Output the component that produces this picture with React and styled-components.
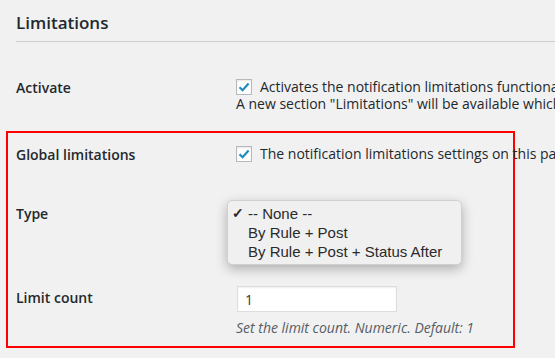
import React from "react";
import styled, { createGlobalStyle } from "styled-components";

const Global = createGlobalStyle`
  html, body {
    margin: 0;
    background: #f1f1f1;
    overflow: hidden;
  }
  body {
    font-family: "Open Sans", "Liberation Sans", sans-serif;
    color: #23282d;
    font-size: 14px;
  }
`;

function Check() {
  return (
    <Box>
      <svg width="12" height="12" viewBox="0 0 12 12">
        <path d="M1.5 6.2 L4.6 9.2 L10.6 2.4" fill="none" stroke="#1e8cbe" strokeWidth="2.2" />
      </svg>
    </Box>
  );
}

export default function App() {
  return (
    <>
      <Global />
      <Page>
        <Title>Limitations</Title>
        <Divider />

        <Row top={36}>
          <Label>Activate</Label>
          <Field>
            <CheckLine>
              <Check />
              Activates the notification limitations functionality for this post type.
            </CheckLine>
            <Line>
              A new section "Limitations" will be available which allows to set limitations.
            </Line>
          </Field>
        </Row>

        <Marked>
          <Row top={12}>
            <Label>Global limitations</Label>
            <Field>
              <CheckLine>
                <Check />
                The notification limitations settings on this page apply to all posts.
              </CheckLine>
            </Field>
          </Row>

          <Row top={39}>
            <Label>Type</Label>
            <Field>
              <Menu>
                <Option selected>-- None --</Option>
                <Option>By Rule + Post</Option>
                <Option>By Rule + Post + Status After</Option>
              </Menu>
            </Field>
          </Row>

          <Row top={62}>
            <Label pad={2}>Limit count</Label>
            <Field>
              <Input defaultValue="1" />
              <Description>Set the limit count. Numeric. Default: 1</Description>
            </Field>
          </Row>
        </Marked>
      </Page>
    </>
  );
}

const Page = styled.div`
  padding-left: 16px;
  white-space: nowrap;
`;

const Title = styled.h2`
  margin: 0;
  padding-top: 11px;
  font-size: 17px;
  line-height: 23px;
  font-weight: 600;
  color: #23282d;
`;

const Divider = styled.div`
  margin-top: 7px;
  height: 1px;
  background: #cfcfcf;
`;

const Row = styled.div`
  display: flex;
  align-items: flex-start;
  margin-top: ${(p) => p.top}px;
`;

const Label = styled.div`
  width: 220px;
  flex: none;
  padding-top: ${(p) => p.pad || 0}px;
  font-weight: 600;
  line-height: 20px;
`;

const Field = styled.div`
  position: relative;
  line-height: 17px;
`;

const CheckLine = styled.div`
  display: flex;
  align-items: center;
  gap: 8px;
  height: 17px;
`;

const Line = styled.div``;

const Box = styled.span`
  width: 16px;
  height: 16px;
  box-sizing: border-box;
  flex: none;
  border: 1px solid #b4b9be;
  background: #fff;
  box-shadow: inset 0 1px 2px rgba(0, 0, 0, 0.1);
  display: flex;
  align-items: center;
  justify-content: center;
`;

const Marked = styled.div`
  margin-top: 19px;
  margin-left: -10px;
  width: 509px;
  height: 217px;
  box-sizing: border-box;
  border: 2px solid #f00;
  padding-left: 8px;
`;

const Menu = styled.div`
  position: absolute;
  left: -9px;
  top: -4px;
  width: 235px;
  padding: 3px 0;
  box-sizing: border-box;
  background: #f0f0f0;
  border: 1px solid #d0d0d0;
  border-radius: 5px;
  box-shadow: 0 4px 12px rgba(0, 0, 0, 0.28);
  font-family: "Liberation Sans", Arial, sans-serif;
  font-size: 15px;
  color: #2a2a2a;
`;

const Option = styled.div`
  position: relative;
  height: 19px;
  line-height: 19px;
  padding-left: 20px;
  &::before {
    content: ${(p) => (p.selected ? '"\\2713"' : '""')};
    position: absolute;
    left: 4px;
    font-size: 14px;
    font-weight: 700;
  }
`;

const Input = styled.input`
  display: block;
  width: 160px;
  height: 26px;
  margin: 0 0 0 1px;
  box-sizing: border-box;
  border: 1px solid #ddd;
  background: #fff;
  box-shadow: inset 0 1px 2px rgba(0, 0, 0, 0.07);
  padding: 0 7px;
  font-family: "Open Sans", sans-serif;
  font-size: 14px;
  color: #32373c;
  outline: none;
`;

const Description = styled.p`
  margin: 6px 0 0;
  font-size: 14px;
  line-height: 19px;
  font-style: italic;
  color: #555d66;
`;
